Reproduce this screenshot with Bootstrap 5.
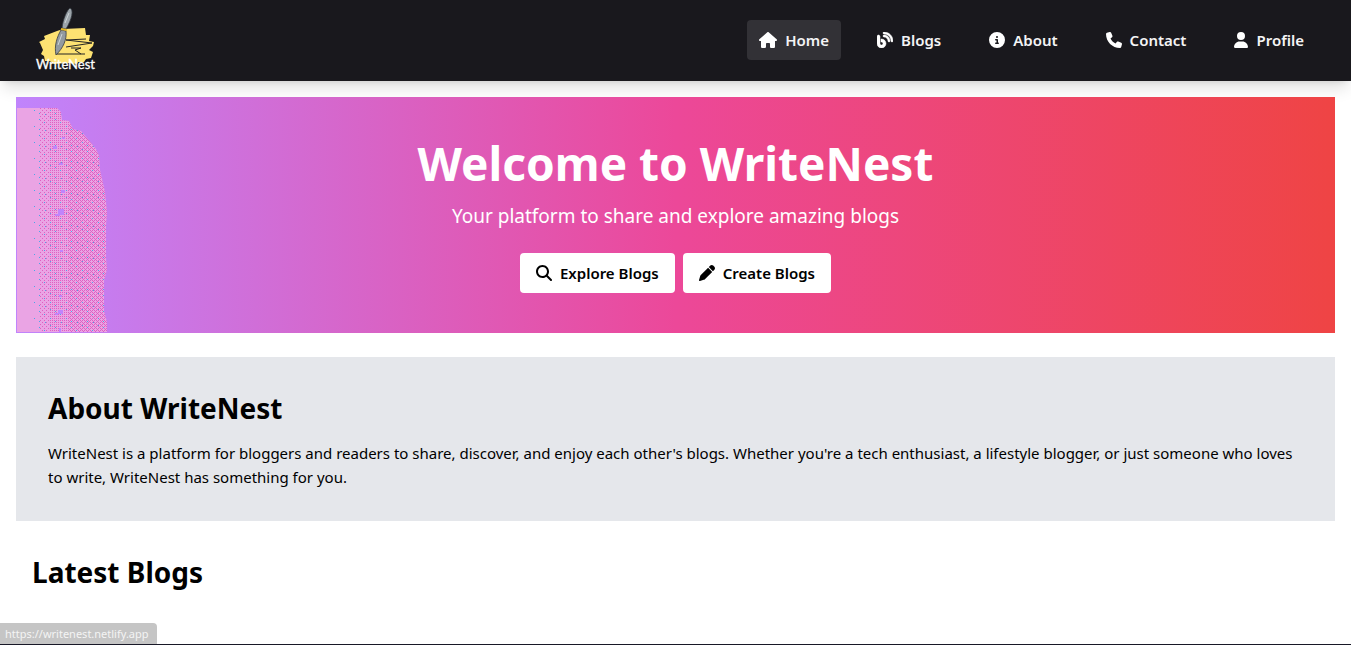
<!DOCTYPE html>
<html lang="en">
<head>
<meta charset="utf-8">
<meta name="viewport" content="width=device-width, initial-scale=1">
<title>WriteNest</title>
<link rel="stylesheet" href="https://cdn.jsdelivr.net/npm/bootstrap@5.3.0/dist/css/bootstrap.min.css">
<style>
body{font-family:"Noto Sans","Open Sans",sans-serif;font-size:15px;line-height:24px;color:#000;background:#fff}
h1,h2{font-weight:700}
h1{font-size:46px;line-height:52px;margin-bottom:12px}
h2{font-size:28px;line-height:38px;margin-bottom:14px}
.ic{height:16px;width:auto;fill:currentColor;flex:none}
.site-nav{background:#19181d;padding:7px 35px 8px;box-shadow:0 10px 15px -3px rgba(0,0,0,.12),0 4px 6px -4px rgba(0,0,0,.12)}
.menu{gap:24px}
.menu .nav-link{color:#f4f4f5;font-weight:600;padding:8px 12px;border-radius:4px}
.menu .nav-link.active{background:#323136}
.menu .ic{fill:#fff}
.hero{background:linear-gradient(to right,#c084fc,#ec4899,#ef4444);padding:40px}
.tagline{font-size:19px;line-height:30px;margin-bottom:22px}
.hero .btn{background:#fff;color:#000;font-size:15px;font-weight:600;line-height:24px;padding:8px 16px;border:0;border-radius:4px}
.cloud{left:0;bottom:0;width:92px;height:225px}
.about{background:#e5e7eb;padding:32px;margin-top:24px}
.status{font-size:11px;line-height:21px;padding:0 8px 0 5px;background:#c5c5c5;color:#f4f4f4;border-radius:0 4px 0 0;left:0;bottom:1px;z-index:5}
.foot{border-top:1px solid #181827}
</style>
</head>
<body class="d-flex flex-column min-vh-100">
<nav class="site-nav d-flex align-items-center justify-content-between position-relative">
  <a href="#" aria-label="WriteNest home">
    <svg class="d-block" width="62" height="66" viewBox="0 0 62 66">
      <path fill="#fde272" d="M4 35l6-3-1-3 13-5 6-2 22-1 1 7 4 0-1 6 5 1-1 4-4 4 4 2-2 6-5 1-2 3-6 0-1 2-9-1-14 1-4-3-5 0-1-5-3-2 2-4-3-7z"/>
      <path fill="none" stroke="#252524" stroke-linejoin="round" d="M31 33l20-1M31 33l26 3-26 4M22 47l28 0M36 41l10 0-6 2 6 4"/>
      <path fill="#9ca4aa" stroke="#343840" stroke-width=".8" d="M27 21c1-9 5-18 8-20 4 2 2 11-4 21z"/>
      <path fill="#929aa0" stroke="#343840" stroke-width=".8" d="M26 23l5 1c1 9-3 17-10 24-2-9 1-18 5-25z"/>
      <path stroke="#e4b828" stroke-width="2" d="M26 22l6 1"/>
      <path stroke="#cdd4d8" fill="none" d="M30 16l4-10M23 38l4-11"/>
      <text x="1" y="62" fill="#fff" stroke="#fff" stroke-width=".3" font-family="Lato, sans-serif" font-size="13">WriteNest</text>
    </svg>
  </a>
  <div class="menu d-flex">
    <a class="nav-link active d-flex align-items-center gap-2" href="#"><svg class="ic" viewBox="0 0 576 512"><path d="M575.8 255.5c0 18-15 32.1-32 32.1h-32l.7 160.2c0 2.7-.2 5.4-.5 8.1V472c0 22.1-17.9 40-40 40H392c-22.1 0-40-17.9-40-40V384c0-17.7-14.3-32-32-32H256c-17.7 0-32 14.3-32 32v88c0 22.1-17.9 40-40 40H104c-22.1 0-40-17.9-40-40V287.6H32c-18 0-32-14-32-32.1c0-9 3-17 10-24L266.4 8c7-7 15-8 22-8s15 2 21 7L564.8 231.5c8 7 12 15 11 24z"/></svg>Home</a>
    <a class="nav-link d-flex align-items-center gap-2" href="#"><svg class="ic" viewBox="0 0 512 512"><path stroke="#fff" stroke-width="16" d="M192 32c0 17.7 14.3 32 32 32c123.7 0 224 100.3 224 224c0 17.7 14.3 32 32 32s32-14.3 32-32C512 128.9 383.1 0 224 0c-17.7 0-32 14.3-32 32zm0 96c0 17.7 14.3 32 32 32c70.7 0 128 57.3 128 128c0 17.7 14.3 32 32 32s32-14.3 32-32c0-106-86-192-192-192c-17.7 0-32 14.3-32 32zM96 144c0-26.5-21.5-48-48-48S0 117.5 0 144V368c0 79.5 64.5 144 144 144s144-64.5 144-144s-64.5-144-144-144H128v96h16c26.5 0 48 21.5 48 48s-21.5 48-48 48s-48-21.5-48-48V144z"/></svg>Blogs</a>
    <a class="nav-link d-flex align-items-center gap-2" href="#"><svg class="ic" viewBox="0 0 512 512"><path d="M256 512A256 256 0 1 0 256 0a256 256 0 1 0 0 512zM216 336h24V272H216c-13.3 0-24-10.7-24-24s10.7-24 24-24h48c13.3 0 24 10.7 24 24v88h8c13.3 0 24 10.7 24 24s-10.7 24-24 24H216c-13.3 0-24-10.7-24-24s10.7-24 24-24zm40-208a32 32 0 1 1 0 64 32 32 0 1 1 0-64z"/></svg>About</a>
    <a class="nav-link d-flex align-items-center gap-2" href="#"><svg class="ic" viewBox="0 0 512 512"><path d="M164.9 24.6c-7.7-18.6-28-28.5-47.4-23.2l-88 24C12.1 30.2 0 46 0 64C0 311.4 200.6 512 448 512c18 0 33.8-12.1 38.6-29.5l24-88c5.3-19.4-4.6-39.7-23.2-47.4l-96-40c-16.3-6.8-35.2-2.1-46.3 11.6L304.7 368C234.3 334.7 177.3 277.7 144 207.3L193.3 167c13.7-11.2 18.4-30 11.6-46.3l-40-96z"/></svg>Contact</a>
    <a class="nav-link d-flex align-items-center gap-2" href="#"><svg class="ic" viewBox="0 0 448 512"><path d="M224 256A128 128 0 1 0 224 0a128 128 0 1 0 0 256zm-45.7 48C79.8 304 0 383.8 0 482.3C0 498.7 13.3 512 29.7 512H418.3c16.4 0 29.7-13.3 29.7-29.7C448 383.8 368.2 304 269.7 304H178.3z"/></svg>Profile</a>
  </div>
</nav>
<main class="p-3">
  <section class="hero text-white text-center position-relative">
    <svg class="cloud position-absolute" viewBox="0 0 92 225" shape-rendering="crispEdges" aria-hidden="true">
      <defs>
        <clipPath id="edge"><path d="M1 0H41L45 4 46 12 53 13 57 21 65 23 80 41 83 48 84 62 89 84 91 105 90 117 90 150 91 161 88 173 88 203 91 214 91 224H1z"/></clipPath>
        <pattern id="sparse" width="16" height="16" patternUnits="userSpaceOnUse"><path fill="#4ba6e8" d="M2 2h1v1h-1zM13 6h1v1h-1zM7 11h1v1h-1z"/></pattern>
        <pattern id="light" width="4" height="4" patternUnits="userSpaceOnUse"><path fill="#df61c1" d="M0 0h1v1h-1zM2 2h1v1h-1z"/></pattern>
        <pattern id="medium" width="4" height="4" patternUnits="userSpaceOnUse"><path fill="#df61c1" d="M0 0h1v1h-1zM2 0h1v1h-1zM0 2h1v1h-1zM2 2h1v1h-1z"/></pattern>
        <pattern id="dense" width="8" height="8" patternUnits="userSpaceOnUse"><path fill="#df61c1" d="M0 0h1v1h-1zM2 0h1v1h-1zM4 0h1v1h-1zM6 0h1v1h-1zM1 1h1v1h-1zM5 1h1v1h-1zM0 2h1v1h-1zM2 2h1v1h-1zM4 2h1v1h-1zM6 2h1v1h-1zM3 3h1v1h-1zM7 3h1v1h-1zM0 4h1v1h-1zM2 4h1v1h-1zM4 4h1v1h-1zM6 4h1v1h-1zM1 5h1v1h-1zM5 5h1v1h-1zM0 6h1v1h-1zM2 6h1v1h-1zM4 6h1v1h-1zM6 6h1v1h-1zM3 7h1v1h-1zM7 7h1v1h-1z"/></pattern>
      </defs>
      <g clip-path="url(#edge)">
        <path fill="#eaa4e4" d="M0 0h92v225H0z"/>
        <path fill="url(#light)" d="M23 0h11v225H23z"/>
        <path fill="url(#medium)" d="M34 0h18v225H34z"/>
        <path fill="url(#dense)" d="M52 0h40v225H52z"/>
        <path fill="url(#sparse)" d="M14 0h78v225H14z"/>
        <path fill="url(#sparse)" transform="translate(5 3)" d="M18 0h78v225H18z"/>
        <path fill="#c084fc" d="M46 29h3v2h-3zM37 38h4v3h-4zM43 55h4v2h-4zM45 82h4v3h-4zM42 101h6v6h-6zM39 106h5v2h-5zM44 142h3v2h-3zM43 187h3v2h-3zM42 202h5v4h-5zM39 205h3v2h-3zM43 220h2v4h-2z"/>
      </g>
    </svg>
    <h1>Welcome to WriteNest</h1>
    <p class="tagline">Your platform to share and explore amazing blogs</p>
    <div class="d-flex justify-content-center gap-2">
      <button type="button" class="btn d-flex align-items-center gap-2"><svg class="ic" viewBox="0 0 512 512"><path d="M416 208c0 45.9-14.9 88.3-40 122.7L502.6 457.4c12.5 12.5 12.5 32.8 0 45.3s-32.8 12.5-45.3 0L330.7 376c-34.4 25.2-76.8 40-122.7 40C93.1 416 0 322.9 0 208S93.1 0 208 0S416 93.1 416 208zM208 352a144 144 0 1 0 0-288 144 144 0 1 0 0 288z"/></svg>Explore Blogs</button>
      <button type="button" class="btn d-flex align-items-center gap-2"><svg class="ic" viewBox="0 0 512 512"><path d="M362.7 19.3L314.3 67.7 444.3 197.7l48.4-48.4c25-25 25-65.5 0-90.5L453.3 19.3c-25-25-65.5-25-90.5 0zm-71 71L58.6 323.5c-10.4 10.4-18 23.3-22.2 37.4L1 481.2C-1.5 489.7 .8 498.8 7 505s15.3 8.5 23.7 6.1l120.3-35.4c14.1-4.2 27-11.8 37.4-22.2L421.7 220.3 291.7 90.3z"/></svg>Create Blogs</button>
    </div>
  </section>
  <section class="about">
    <h2>About WriteNest</h2>
    <p class="mb-0">WriteNest is a platform for bloggers and readers to share, discover, and enjoy each other's blogs. Whether you're a tech enthusiast, a lifestyle blogger, or just someone who loves to write, WriteNest has something for you.</p>
  </section>
  <section class="p-3 mt-3">
    <h2 class="mb-0">Latest Blogs</h2>
  </section>
</main>
<footer class="foot mt-auto"></footer>
<div class="status position-fixed">https://writenest.netlify.app</div>
<script src="https://cdn.jsdelivr.net/npm/bootstrap@5.3.0/dist/js/bootstrap.bundle.min.js"></script>
</body>
</html>
